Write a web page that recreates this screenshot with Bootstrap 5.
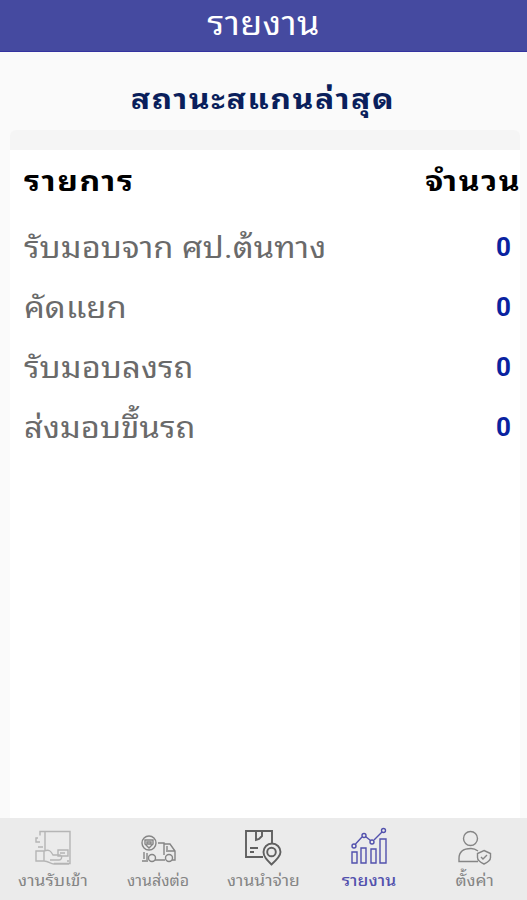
<!DOCTYPE html>
<html lang="th">
<head>
<meta charset="utf-8">
<meta name="viewport" content="width=device-width, initial-scale=1">
<title>รายงาน</title>
<link href="https://cdn.jsdelivr.net/npm/bootstrap@5.3.0/dist/css/bootstrap.min.css" rel="stylesheet">
<style>
  body { font-family: Roboto, "Noto Sans Thai Looped", "Noto Looped Thai", Loma, Waree, Garuda, "Noto Sans", sans-serif; background: #fafafa; color: #000; white-space: nowrap; }
  .wide { display: inline-block; transform: scaleX(1.09); }
  .wider { display: inline-block; transform: scaleX(1.14); letter-spacing: 1.4px; }
  .from-start { transform-origin: left; }
  .from-end { transform-origin: right; margin-right: -1.4px; }
  .app-header { height: 52px; background: #454aa0; border-bottom: 1px solid #3432a0; color: #fff; font-size: 33px; line-height: 48px; letter-spacing: .3px; }
  .screen-title { height: 78px; color: #0a1f5c; font-size: 28px; line-height: 96px; }
  .report { margin: 0 7px 0 10px; }
  .report-strip { height: 20px; background: #f5f5f5; border-radius: 6px 6px 0 0; }
  .report-head { height: 66px; padding-left: 14px; font-size: 28px; line-height: 63px; }
  .report-row { height: 60px; padding: 0 9px 0 14px; font-size: 30px; line-height: 64px; color: #6a6a6a; }
  .report-row .wide { letter-spacing: .1px; }
  .count { font-size: 26px; line-height: 62px; color: #0a22a0; }
  .tabbar { height: 82px; background: #ebebeb; color: #858585; font-size: 16px; }
  .tabbar a { color: inherit; width: 20%; padding-top: 8px; line-height: 26px; }
  .tabbar a.active { color: #5251ad; font-weight: 500; }
  .tabbar svg { width: 44px; height: 42px; fill: none; stroke: currentColor; stroke-width: 1.4; }
  .tabbar .faint { stroke: #b5b5b5; }
  .tabbar .strong { stroke: #606060; stroke-width: 1.9; }
</style>
</head>
<body class="d-flex flex-column vh-100 overflow-hidden">
<header class="app-header text-center flex-shrink-0"><span class="wide">รายงาน</span></header>
<h1 class="screen-title text-center fw-bold m-0 flex-shrink-0"><span class="wider">สถานะสแกนล่าสุด</span></h1>
<main class="report d-flex flex-column flex-grow-1">
  <div class="report-strip"></div>
  <div class="bg-white flex-grow-1">
    <div class="report-head d-flex justify-content-between fw-bold"><span class="wider from-start">รายการ</span><span class="wider from-end">จำนวน</span></div>
    <div class="report-row d-flex justify-content-between"><span class="wide from-start">รับมอบจาก ศป.ต้นทาง</span><span class="count fw-bold">0</span></div>
    <div class="report-row d-flex justify-content-between"><span class="wide from-start">คัดแยก</span><span class="count fw-bold">0</span></div>
    <div class="report-row d-flex justify-content-between"><span class="wide from-start">รับมอบลงรถ</span><span class="count fw-bold">0</span></div>
    <div class="report-row d-flex justify-content-between"><span class="wide from-start">ส่งมอบขึ้นรถ</span><span class="count fw-bold">0</span></div>
  </div>
</main>
<nav class="tabbar d-flex flex-shrink-0">
  <a href="#" class="d-flex flex-column align-items-center text-decoration-none">
    <svg class="faint" viewBox="0 0 44 42"><path d="M14 24V5.500h25v32H23M14 5.500H9v4M7 12H5v4h4M7 21h5M5 25h8v10H5zM13 25c5-2 7 0 9 4h6c4 0 3 5 0 5h-9M13 35c5 0 6 3 10 3h15M27 24h10v6H27zM29 27h5M36 35h2"/></svg>
    <span class="wide">งานรับเข้า</span></a>
  <a href="#" class="d-flex flex-column align-items-center text-decoration-none">
    <svg viewBox="0 0 44 42"><circle cx="13" cy="17" r="7"/><path d="M9 14h8v4l-4 4-4-4zM11 16h4v2h-4zM22 17h6v12M28 18h6l5 7v9h-3M30 25h9M31 20v4M8 26v7M11 27v7M6 35h6M19 34h10"/><circle cx="16" cy="32" r="3.500"/><circle cx="33" cy="32" r="3.500"/></svg>
    <span>งานส่งต่อ</span></a>
  <a href="#" class="d-flex flex-column align-items-center text-decoration-none">
    <svg class="strong" viewBox="0 0 44 42"><path d="M22 31H5V5h26v12M15 5v9l3-1 3-3V5M9 22h8M9 26h4M30.500 38.500c-5-5-8-8-8-12.500a8 8 0 0 1 17 0c0 4-4 8-9 12.500z"/><circle cx="30.500" cy="26" r="4.300"/></svg>
    <span class="wide">งานนำจ่าย</span></a>
  <a href="#" class="active d-flex flex-column align-items-center text-decoration-none">
    <svg viewBox="0 0 44 42"><path d="M5 26h5v11H5zM14 22h5v15h-5zM24 23h5v14h-5zM33 13h6v24h-6zM8.500 18l6.500-7M18.500 10.500l5 4M27 14l8-8"/><circle cx="7" cy="20" r="2"/><circle cx="17" cy="9.500" r="2"/><circle cx="25" cy="16" r="2"/><circle cx="36.500" cy="4.500" r="2"/></svg>
    <span class="wide">รายงาน</span></a>
  <a href="#" class="d-flex flex-column align-items-center text-decoration-none">
    <svg viewBox="0 0 44 42"><circle cx="18.500" cy="12.500" r="7"/><path d="M26 35.500H7v-3c0-7 5-10 12-10 3 0 5 1 7 2.500M32 24.500l6.500 3v4c0 3-3 5-6.500 6.500-3.500-1.500-6.500-3.500-6.500-6.500v-4zM29 31l2 2 4-4"/></svg>
    <span class="wide">ตั้งค่า</span></a>
</nav>
<script src="https://cdn.jsdelivr.net/npm/bootstrap@5.3.0/dist/js/bootstrap.bundle.min.js"></script>
</body>
</html>
